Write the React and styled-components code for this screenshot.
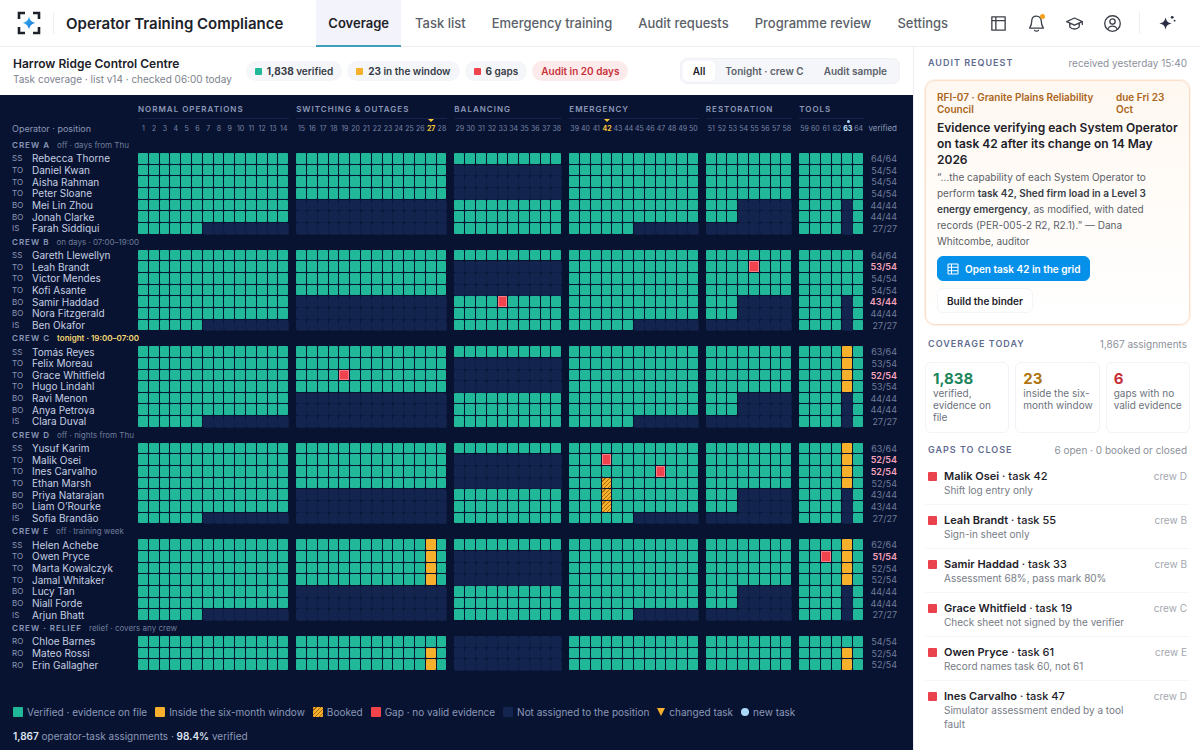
import { Fragment, useState } from 'react';

import styled, { createGlobalStyle, css } from 'styled-components';

const GROUPS = [
    { name: 'Normal operations', from: 1, to: 14 },
    { name: 'Switching & outages', from: 15, to: 28 },
    { name: 'Balancing', from: 29, to: 38 },
    { name: 'Emergency', from: 39, to: 50 },
    { name: 'Restoration', from: 51, to: 58 },
    { name: 'Tools', from: 59, to: 64 },
];

const CHANGED = [27, 42];
const ADDED = [63];

const CREWS = [
    {
        name: 'Crew A',
        note: 'off · days from Thu',
        people: [
            { code: 'SS', name: 'Rebecca Thorne' },
            { code: 'TO', name: 'Daniel Kwan' },
            { code: 'TO', name: 'Aisha Rahman' },
            { code: 'TO', name: 'Peter Sloane' },
            { code: 'BO', name: 'Mei Lin Zhou' },
            { code: 'BO', name: 'Jonah Clarke' },
            { code: 'IS', name: 'Farah Siddiqui' },
        ],
    },
    {
        name: 'Crew B',
        note: 'on days · 07:00–19:00',
        people: [
            { code: 'SS', name: 'Gareth Llewellyn' },
            { code: 'TO', name: 'Leah Brandt', marks: { 55: 'gap' } },
            { code: 'TO', name: 'Victor Mendes' },
            { code: 'TO', name: 'Kofi Asante' },
            { code: 'BO', name: 'Samir Haddad', marks: { 33: 'gap' } },
            { code: 'BO', name: 'Nora Fitzgerald' },
            { code: 'IS', name: 'Ben Okafor' },
        ],
    },
    {
        name: 'Crew C',
        note: 'tonight · 19:00–07:00',
        tonight: true,
        people: [
            { code: 'SS', name: 'Tomás Reyes', marks: { 63: 'window' } },
            { code: 'TO', name: 'Felix Moreau', marks: { 63: 'window' } },
            { code: 'TO', name: 'Grace Whitfield', marks: { 19: 'gap', 63: 'window' } },
            { code: 'TO', name: 'Hugo Lindahl', marks: { 63: 'window' } },
            { code: 'BO', name: 'Ravi Menon' },
            { code: 'BO', name: 'Anya Petrova' },
            { code: 'IS', name: 'Clara Duval' },
        ],
    },
    {
        name: 'Crew D',
        note: 'off · nights from Thu',
        people: [
            { code: 'SS', name: 'Yusuf Karim', marks: { 63: 'window' } },
            { code: 'TO', name: 'Malik Osei', marks: { 42: 'gap', 63: 'window' } },
            { code: 'TO', name: 'Ines Carvalho', marks: { 47: 'gap', 63: 'window' } },
            { code: 'TO', name: 'Ethan Marsh', marks: { 42: 'booked', 63: 'window' } },
            { code: 'BO', name: 'Priya Natarajan', marks: { 42: 'booked' } },
            { code: 'BO', name: 'Liam O’Rourke', marks: { 42: 'booked' } },
            { code: 'IS', name: 'Sofia Brandão' },
        ],
    },
    {
        name: 'Crew E',
        note: 'off · training week',
        people: [
            { code: 'SS', name: 'Helen Achebe', marks: { 27: 'window', 63: 'window' } },
            { code: 'TO', name: 'Owen Pryce', marks: { 27: 'window', 61: 'gap', 63: 'window' } },
            { code: 'TO', name: 'Marta Kowalczyk', marks: { 27: 'window', 63: 'window' } },
            { code: 'TO', name: 'Jamal Whitaker', marks: { 27: 'window', 63: 'window' } },
            { code: 'BO', name: 'Lucy Tan' },
            { code: 'BO', name: 'Niall Forde' },
            { code: 'IS', name: 'Arjun Bhatt' },
        ],
    },
    {
        name: 'Crew · Relief',
        note: 'relief · covers any crew',
        people: [
            { code: 'RO', name: 'Chloe Barnes' },
            { code: 'RO', name: 'Mateo Rossi', marks: { 27: 'window', 63: 'window' } },
            { code: 'RO', name: 'Erin Gallagher', marks: { 27: 'window', 63: 'window' } },
        ],
    },
];

const GAPS = [
    { name: 'Malik Osei', task: 42, crew: 'D', reason: 'Shift log entry only' },
    { name: 'Leah Brandt', task: 55, crew: 'B', reason: 'Sign-in sheet only' },
    { name: 'Samir Haddad', task: 33, crew: 'B', reason: 'Assessment 68%, pass mark 80%' },
    { name: 'Grace Whitfield', task: 19, crew: 'C', reason: 'Check sheet not signed by the verifier' },
    { name: 'Owen Pryce', task: 61, crew: 'E', reason: 'Record names task 60, not 61' },
    { name: 'Ines Carvalho', task: 47, crew: 'D', reason: 'Simulator assessment ended by a tool fault' },
];

const TABS = ['Coverage', 'Task list', 'Emergency training', 'Audit requests', 'Programme review', 'Settings'];
const VIEWS = ['All', 'Tonight · crew C', 'Audit sample'];

function isAssigned(code, task) {
    const balancing = task >= 29 && task <= 38;

    if (code === 'SS') return true;
    if (code === 'TO' || code === 'RO') return !balancing;
    if (task === 63) return false;
    if (task >= 59 || balancing) return true;
    if (code === 'BO') return task <= 14 || (task >= 39 && task <= 53);
    return task <= 6 || (task >= 39 && task <= 44);
}

function tasksOf(group) {
    return Array.from({ length: group.to - group.from + 1 }, (_, i) => group.from + i);
}

function OperatorRow({ person }) {
    const marks = person.marks || {};
    let total = 0;

    for (let task = 1; task <= 64; task++) {
        if (isAssigned(person.code, task)) total++;
    }

    const verified = total - Object.keys(marks).length;
    const hasGap = Object.values(marks).includes('gap');

    return (
        <Row>
            <Person scope="row">
                <Code>{person.code}</Code>
                {person.name}
            </Person>
            {GROUPS.map((group) => (
                <Fragment key={group.name}>
                    {group.from > 1 && <td aria-hidden="true" />}
                    {tasksOf(group).map((task) => (
                        <Cell
                            key={task}
                            $state={marks[task] || (isAssigned(person.code, task) ? 'verified' : 'none')}
                        />
                    ))}
                </Fragment>
            ))}
            <Score $gap={hasGap}>{verified}/{total}</Score>
        </Row>
    );
}

function CoverageTable() {
    return (
        <Table>
            <thead>
                <GroupRow>
                    <td />
                    {GROUPS.map((group) => (
                        <Fragment key={group.name}>
                            {group.from > 1 && <td aria-hidden="true" />}
                            <GroupName scope="colgroup" colSpan={group.to - group.from + 1} $span={group.to - group.from + 1}>
                                {group.name}
                            </GroupName>
                        </Fragment>
                    ))}
                </GroupRow>
                <NumberRow>
                    <Corner scope="col">Operator · position</Corner>
                    {GROUPS.map((group) => (
                        <Fragment key={group.name}>
                            {group.from > 1 && <td aria-hidden="true" />}
                            {tasksOf(group).map((task) => (
                                <TaskNumber
                                    key={task}
                                    scope="col"
                                    $changed={CHANGED.includes(task)}
                                    $added={ADDED.includes(task)}
                                >
                                    {task}
                                </TaskNumber>
                            ))}
                        </Fragment>
                    ))}
                    <ScoreHead scope="col">verified</ScoreHead>
                </NumberRow>
            </thead>
            <tbody>
                {CREWS.map((crew) => (
                    <Fragment key={crew.name}>
                        <CrewRow>
                            <CrewName scope="colgroup" colSpan={71}>
                                {crew.name}
                                <CrewNote $tonight={crew.tonight}>{crew.note}</CrewNote>
                            </CrewName>
                        </CrewRow>
                        {crew.people.map((person) => (
                            <OperatorRow key={person.name} person={person} />
                        ))}
                    </Fragment>
                ))}
            </tbody>
        </Table>
    );
}

export default function App() {
    const [tab, setTab] = useState('Coverage');
    const [view, setView] = useState('All');

    return (
        <Page>
            <GlobalStyle />
            <Header>
                <Logo viewBox="0 0 24 24" aria-hidden="true">
                    <defs>
                        <linearGradient id="spark" x1="0" y1="0" x2="1" y2="1">
                            <stop offset="0" stopColor="#35c3f0" />
                            <stop offset="1" stopColor="#1763d6" />
                        </linearGradient>
                    </defs>
                    <path d="M2 8V2h6M16 2h6v6M22 16v6h-6M8 22H2v-6" fill="none" stroke="#1d2129" strokeWidth="2.6" />
                    <path d="M12 5.600c.9 3.900 2.500 5.500 6.400 6.400-3.900.9-5.500 2.500-6.400 6.400-.9-3.900-2.500-5.500-6.400-6.400 3.900-.9 5.500-2.500 6.400-6.400z" fill="url(#spark)" />
                </Logo>
                <Divider />
                <Brand>Operator Training Compliance</Brand>
                <Nav>
                    {TABS.map((name) => (
                        <Tab
                            key={name}
                            href="#"
                            $active={name === tab}
                            onClick={(event) => {
                                event.preventDefault();
                                setTab(name);
                            }}
                        >
                            {name}
                        </Tab>
                    ))}
                </Nav>
                <Tools>
                    <IconButton aria-label="Layout">
                        <Icon viewBox="0 0 20 20">
                            <path d="M3 3h14v14H3zM3 7h14M7.2 3v14" />
                        </Icon>
                    </IconButton>
                    <IconButton aria-label="Notifications">
                        <Icon viewBox="0 0 20 20">
                            <path d="M10 2.2c-3 0-5 2.2-5 5.2 0 4-1.300 5.800-2.300 7.400h14.600c-1-1.600-2.300-3.400-2.300-7.400 0-3-2-5.200-5-5.200zM8 17.200c.8 1.200 3.200 1.200 4 0" />
                        </Icon>
                        <Alert />
                    </IconButton>
                    <IconButton aria-label="Training">
                        <Icon viewBox="0 0 20 20">
                            <path d="M10 4.200 1.800 8l8.200 3.800L18.200 8zM5 9.600v4c1.200 1.500 3 2.200 5 2.200s3.800-.7 5-2.200v-4M18.200 8v3" />
                        </Icon>
                    </IconButton>
                    <IconButton aria-label="Account">
                        <Icon viewBox="0 0 20 20">
                            <circle cx="10" cy="10" r="8.200" />
                            <circle cx="10" cy="8" r="2.800" />
                            <path d="M5 16.200c.7-2.400 2.500-3.500 5-3.500s4.300 1.100 5 3.500" />
                        </Icon>
                    </IconButton>
                    <ToolsDivider />
                    <IconButton aria-label="Assistant">
                        <SparkIcon viewBox="0 0 20 20">
                            <path d="M9 3.500c.9 4.300 2.300 5.700 6.500 6.500-4.200.8-5.600 2.200-6.500 6.500C8.100 12.200 6.700 10.800 2.500 10 6.700 9.200 8.100 7.800 9 3.500z" />
                            <circle cx="16" cy="3.500" r="1.500" />
                            <circle cx="18.500" cy="7" r="1" />
                        </SparkIcon>
                    </IconButton>
                </Tools>
            </Header>

            <Body>
                <Main>
                    <Toolbar>
                        <div>
                            <Site>Harrow Ridge Control Centre</Site>
                            <SiteNote>Task coverage · list v14 · checked 06:00 today</SiteNote>
                        </div>
                        <Pills>
                            <Pill><Dot $state="verified" /><span><b>1,838</b> verified</span></Pill>
                            <Pill><Dot $state="window" /><span><b>23</b> in the window</span></Pill>
                            <Pill><Dot $state="gap" /><span><b>6</b> gaps</span></Pill>
                            <Pill $danger>Audit in 20 days</Pill>
                        </Pills>
                        <Segments>
                            {VIEWS.map((name) => (
                                <Segment key={name} $active={name === view} onClick={() => setView(name)}>
                                    {name}
                                </Segment>
                            ))}
                        </Segments>
                    </Toolbar>

                    <Board>
                        <CoverageTable />
                        <Legend>
                            <Key><Swatch $state="verified" />Verified · evidence on file</Key>
                            <Key><Swatch $state="window" />Inside the six-month window</Key>
                            <Key><Swatch $state="booked" />Booked</Key>
                            <Key><Swatch $state="gap" />Gap · no valid evidence</Key>
                            <Key><Swatch $state="none" />Not assigned to the position</Key>
                            <Key>
                                <Glyph viewBox="0 0 8 8"><path d="M0 0h8L4 8z" fill="#f6b02c" /></Glyph>
                                changed task
                            </Key>
                            <Key>
                                <Glyph viewBox="0 0 8 8"><circle cx="4" cy="4" r="4" fill="#a9d8f8" /></Glyph>
                                new task
                            </Key>
                        </Legend>
                        <Total><b>1,867</b> operator-task assignments · <b>98.4%</b> verified</Total>
                    </Board>
                </Main>

                <Aside>
                    <SectionHead>
                        <h2>Audit request</h2>
                        <span>received yesterday 15:40</span>
                    </SectionHead>
                    <Request>
                        <RequestMeta>
                            <span>RFI-07 · Granite Plains Reliability Council</span>
                            <Due>due Fri 23 Oct</Due>
                        </RequestMeta>
                        <RequestTitle>Evidence verifying each System Operator on task 42 after its change on 14 May 2026</RequestTitle>
                        <Quote>
                            “…the capability of each System Operator to perform <b>task 42, Shed firm load in a Level 3
                            energy emergency</b>, as modified, with dated records (PER-005-2 R2, R2.1).” — Dana
                            Whitcombe, auditor
                        </Quote>
                        <Actions>
                            <Button $primary>
                                <GridIcon viewBox="0 0 12 12">
                                    <path d="M1 1h10v10H1zM1 4.300h10M1 7.700h10M4.500 1v10" />
                                </GridIcon>
                                Open task 42 in the grid
                            </Button>
                            <Button>Build the binder</Button>
                        </Actions>
                    </Request>

                    <SectionHead>
                        <h2>Coverage today</h2>
                        <span>1,867 assignments</span>
                    </SectionHead>
                    <Stats>
                        <Stat $color="#1b855c"><b>1,838</b>verified, evidence on file</Stat>
                        <Stat $color="#ad7410"><b>23</b>inside the six-month window</Stat>
                        <Stat $color="#c92f37"><b>6</b>gaps with no valid evidence</Stat>
                    </Stats>

                    <SectionHead>
                        <h2>Gaps to close</h2>
                        <span>6 open · 0 booked or closed</span>
                    </SectionHead>
                    <GapList>
                        {GAPS.map((gap) => (
                            <Gap key={gap.name}>
                                <GapDot />
                                <GapText>
                                    <p><b>{gap.name}</b> · task {gap.task}</p>
                                    <small>{gap.reason}</small>
                                </GapText>
                                <GapCrew>crew {gap.crew}</GapCrew>
                            </Gap>
                        ))}
                    </GapList>
                </Aside>
            </Body>
        </Page>
    );
}

const GlobalStyle = createGlobalStyle`
    * {
        box-sizing: border-box;
    }

    body {
        margin: 0;
        background: #ffffff;
        color: #1d2129;
        font-family: Inter, "Liberation Sans", sans-serif;
        font-size: 10px;
    }

    h1, h2, h3, p, ul {
        margin: 0;
        padding: 0;
    }

    button {
        border: 0;
        background: none;
        font: inherit;
        color: inherit;
        cursor: pointer;
    }

    th, td {
        padding: 0;
        font-weight: 400;
        text-align: left;
    }
`;

const FILLS = {
    verified: css`background: #21b899;`,
    window: css`background: #f6b02c;`,
    booked: css`background: repeating-linear-gradient(135deg, #f6b02c 0 2px, #a8690b 2px 3px);`,
    gap: css`background: #f0434d;`,
    none: css`background: #13254f;`,
};

const Page = styled.div`
    display: flex;
    flex-direction: column;
    min-height: 100vh;
`;

const Header = styled.header`
    display: flex;
    align-items: center;
    height: 47px;
    padding-left: 17px;
    padding-right: 20px;
    border-bottom: 1px solid #eceef2;
`;

const Logo = styled.svg`
    width: 24px;
    height: 24px;
`;

const Divider = styled.span`
    width: 1px;
    height: 22px;
    margin: 0 12px;
    background: #eceef2;
`;

const ToolsDivider = styled(Divider)`
    margin-left: 8px;
`;

const Brand = styled.h1`
    font-size: 15px;
    font-weight: 600;
    white-space: nowrap;
`;

const Nav = styled.nav`
    display: flex;
    align-self: stretch;
    gap: 2px;
    margin-left: 33px;
`;

const Tab = styled.a`
    display: flex;
    align-items: center;
    margin-bottom: -1px;
    padding: 0 12px;
    border-bottom: 2px solid ${(props) => (props.$active ? '#3f9fb8' : 'transparent')};
    background: ${(props) => (props.$active ? '#f3f3fb' : 'transparent')};
    color: ${(props) => (props.$active ? '#1d2129' : '#5b5f68')};
    font-size: 13px;
    font-weight: ${(props) => (props.$active ? 600 : 500)};
    white-space: nowrap;
    text-decoration: none;
`;

const Tools = styled.div`
    display: flex;
    align-items: center;
    margin-left: auto;
`;

const IconButton = styled.button`
    position: relative;
    display: flex;
    align-items: center;
    justify-content: center;
    width: 38px;
    height: 28px;
    padding: 0;

    &:last-child {
        width: 28px;
    }
`;

const Icon = styled.svg`
    width: 19px;
    height: 19px;
    fill: none;
    stroke: #3d4149;
    stroke-width: 1.4;
    stroke-linejoin: round;
    stroke-linecap: round;
`;

const SparkIcon = styled.svg`
    width: 19px;
    height: 19px;
    fill: #2b2f45;
`;

const Alert = styled.i`
    position: absolute;
    top: 5px;
    right: 10px;
    width: 5px;
    height: 5px;
    border-radius: 50%;
    background: #f5a21c;
`;

const Body = styled.div`
    display: flex;
    flex: 1;
`;

const Main = styled.main`
    display: flex;
    flex: 1;
    flex-direction: column;
    min-width: 0;
`;

const Toolbar = styled.div`
    display: flex;
    align-items: center;
    height: 48px;
    padding: 0 13px;
`;

const Site = styled.h2`
    font-size: 12px;
    font-weight: 600;
    line-height: 16px;
`;

const SiteNote = styled.p`
    color: #7d828c;
    line-height: 14px;
`;

const Pills = styled.div`
    display: flex;
    gap: 5px;
    margin-left: 14px;
`;

const Pill = styled.span`
    display: flex;
    align-items: center;
    gap: 5px;
    height: 20px;
    padding: 0 9px;
    border-radius: 10px;
    background: ${(props) => (props.$danger ? '#fdebeb' : '#f5f6f9')};
    color: ${(props) => (props.$danger ? '#c8323a' : '#363b45')};
    font-weight: 600;
    white-space: nowrap;

    b {
        font-weight: 700;
    }
`;

const Dot = styled.i`
    width: 7px;
    height: 7px;
    border-radius: 1px;
    ${(props) => FILLS[props.$state]}
`;

const Segments = styled.div`
    display: flex;
    height: 26px;
    margin-left: auto;
    padding: 2px;
    border: 1px solid #f0f1f4;
    border-radius: 7px;
    background: #f5f6f9;
`;

const Segment = styled.button`
    padding: 0 10px;
    border-radius: 5px;
    background: ${(props) => (props.$active ? '#ffffff' : 'transparent')};
    color: ${(props) => (props.$active ? '#1d2129' : '#5b5f68')};
    font-weight: 600;
    white-space: nowrap;
`;

const Board = styled.section`
    display: flex;
    flex: 1;
    flex-direction: column;
    padding: 5px 16px 6px 12px;
    background: #081331;
    color: #8b98b8;
`;

/* the rows are grids, so that all the task columns share the free width */
const Table = styled.table`
    display: flex;
    flex: 1;
    flex-direction: column;
    margin-bottom: 34px;

    thead {
        display: block;
    }

    tbody {
        display: flex;
        flex: 1;
        flex-direction: column;
    }
`;

const Row = styled.tr`
    display: grid;
    flex: 1 0 11px;
    grid-template-columns:
        126px repeat(14, minmax(0, 1fr))
        7px repeat(14, minmax(0, 1fr))
        7px repeat(10, minmax(0, 1fr))
        7px repeat(12, minmax(0, 1fr))
        7px repeat(8, minmax(0, 1fr))
        7px repeat(6, minmax(0, 1fr))
        33px;
`;

const GroupRow = styled(Row)`
    height: 19px;
`;

const GroupName = styled.th`
    grid-column: span ${(props) => props.$span};
    border-bottom: 1px solid #15234a;
    font-size: 8px;
    font-weight: 600;
    letter-spacing: 1px;
    line-height: 18px;
    text-transform: uppercase;
    white-space: nowrap;
`;

const NumberRow = styled(Row)`
    height: 19px;
    line-height: 19px;
`;

const Corner = styled.th`
    font-size: 9px;
`;

const TaskNumber = styled.th`
    position: relative;
    color: #7886a8;
    font-size: 7px;
    text-align: center;

    ${(props) => props.$changed && css`
        color: #f9c63c;
        font-weight: 700;

        &::before {
            content: '';
            position: absolute;
            top: 0;
            left: 50%;
            margin-left: -3px;
            border: 3px solid transparent;
            border-top: 3px solid #f9c63c;
            border-bottom: 0;
        }
    `}

    ${(props) => props.$added && css`
        color: #c5e6fb;
        font-weight: 700;

        &::before {
            content: '';
            position: absolute;
            top: 1px;
            left: 50%;
            width: 3px;
            height: 3px;
            margin-left: -1px;
            border-radius: 50%;
            background: #a9d8f8;
        }
    `}
`;

const ScoreHead = styled.th`
    font-size: 8px;
    text-align: right;
`;

const CrewRow = styled.tr`
    flex: 0 0 15px;
`;

const CrewName = styled.th`
    display: block;
    font-size: 8px;
    font-weight: 600;
    letter-spacing: 1px;
    line-height: 15px;
    text-transform: uppercase;
`;

const CrewNote = styled.span`
    margin-left: 7px;
    color: ${(props) => (props.$tonight ? '#f3d873' : '#6f7c9a')};
    font-weight: ${(props) => (props.$tonight ? 600 : 400)};
    letter-spacing: 0;
    text-transform: none;
`;

const Person = styled.th`
    display: flex;
    align-items: center;
    color: #c6cfe2;
    font-size: 10px;
    line-height: 11px;
    white-space: nowrap;
`;

const Code = styled.span`
    width: 20px;
    color: #8b98b8;
    font-size: 8px;
`;

const Cell = styled.td`
    margin: 0 1px 1px 0;
    border-radius: 1px;
    ${(props) => FILLS[props.$state]}
    ${(props) => props.$state === 'gap' && 'box-shadow: inset 0 0 0 1px #fb8088;'}
    ${(props) => props.$state === 'none' && 'box-shadow: 1px 1px 0 #0f1f45;'}
`;

const Score = styled.td`
    color: ${(props) => (props.$gap ? '#f7a3bb' : '#6f7c9a')};
    font-size: 9px;
    font-weight: ${(props) => (props.$gap ? 600 : 400)};
    line-height: 11px;
    text-align: right;
`;

const Legend = styled.div`
    display: flex;
    flex-wrap: wrap;
    gap: 4px 8px;
    padding-left: 1px;
    line-height: 14px;
`;

const Key = styled.span`
    display: flex;
    align-items: center;
    gap: 4px;
`;

const Swatch = styled.i`
    width: 10px;
    height: 10px;
    border-radius: 1px;
    ${(props) => FILLS[props.$state]}
`;

const Glyph = styled.svg`
    width: 8px;
    height: 8px;
`;

const Total = styled.p`
    padding-left: 1px;
    margin-top: 9px;
    line-height: 16px;

    b {
        color: #dfe5f2;
        font-weight: 600;
    }
`;

const Aside = styled.aside`
    flex: 0 0 287px;
    padding: 8px 10px 10px 11px;
    border-left: 1px solid #eceef2;
`;

const SectionHead = styled.div`
    display: flex;
    align-items: center;
    justify-content: space-between;
    padding: 0 3px;
    line-height: 16px;

    h2 {
        color: #5f6c92;
        font-size: 9px;
        font-weight: 600;
        letter-spacing: 1px;
        text-transform: uppercase;
    }

    span {
        color: #8d919b;
    }
`;

const Request = styled.section`
    margin: 9px 0 11px;
    padding: 10px 11px 11px;
    border: 1px solid #fbdfcb;
    border-radius: 10px;
    background: linear-gradient(#fff8f1, #ffffff);
    box-shadow: 0 0 0 1px #fdf1e7;
`;

const RequestMeta = styled.div`
    display: flex;
    justify-content: space-between;
    gap: 8px;
    color: #ab6520;
    font-weight: 600;
    line-height: 12px;
`;

const Due = styled.span`
    flex: 0 0 62px;
`;

const RequestTitle = styled.h3`
    margin-top: 5px;
    font-size: 12px;
    font-weight: 600;
    line-height: 16px;
`;

const Quote = styled.p`
    margin-top: 1px;
    color: #5b5f68;
    line-height: 16px;

    b {
        color: #363b45;
        font-weight: 600;
    }
`;

const Actions = styled.div`
    display: flex;
    flex-wrap: wrap;
    gap: 7px;
    margin-top: 7px;
`;

const Button = styled.button`
    display: flex;
    align-items: center;
    gap: 6px;
    height: 25px;
    padding: 0 9px;
    border: 1px solid ${(props) => (props.$primary ? '#0591ea' : '#f5f5f7')};
    border-radius: 6px;
    background: ${(props) => (props.$primary ? '#0591ea' : '#ffffff')};
    color: ${(props) => (props.$primary ? '#ffffff' : '#1d2129')};
    font-weight: 600;
`;

const GridIcon = styled.svg`
    width: 12px;
    height: 12px;
    fill: none;
    stroke: currentColor;
`;

const Stats = styled.div`
    display: grid;
    grid-template-columns: repeat(3, minmax(0, 1fr));
    gap: 6px;
    margin: 10px 0 9px;
`;

const Stat = styled.div`
    min-height: 71px;
    padding: 7px 3px 7px 7px;
    border: 1px solid #f2f3f6;
    border-radius: 6px;
    color: #6d727c;
    line-height: 12px;

    b {
        display: block;
        color: ${(props) => props.$color};
        font-size: 15px;
        font-weight: 700;
        line-height: 17px;
    }
`;

const GapList = styled.ul`
    margin-top: 3px;
    list-style: none;
`;

const Gap = styled.li`
    display: flex;
    gap: 7px;
    padding: 8px 3px 7px;
    line-height: 14px;

    & + & {
        border-top: 1px solid #f6f7f9;
    }
`;

const GapDot = styled.i`
    flex: 0 0 9px;
    height: 9px;
    margin-top: 3px;
    border-radius: 1px;
    background: #e9424c;
`;

const GapText = styled.div`
    flex: 1;

    p {
        font-size: 11px;
        font-weight: 500;
    }

    b {
        font-weight: 600;
    }

    small {
        display: block;
        color: #777c86;
        font-size: 10px;
    }
`;

const GapCrew = styled.span`
    width: 54px;
    color: #a3a7af;
    text-align: right;
`;
